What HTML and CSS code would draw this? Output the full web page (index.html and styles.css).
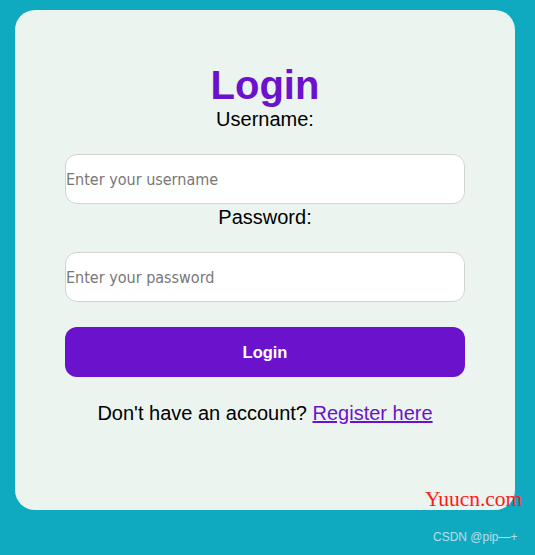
FILE: index.html
```html
<!DOCTYPE html>
<html>
<head>
<meta charset="utf-8">
<link rel="stylesheet" href="styles.css">
</head>
<body>
<div class="card">
  <h1 class="title">Login</h1>
  <form class="form">
    <label class="label" for="u">Username:</label>
    <input class="field" id="u" type="text" placeholder="Enter your username">
    <label class="label" for="p">Password:</label>
    <input class="field" id="p" type="password" placeholder="Enter your password">
    <button class="btn" type="button">Login</button>
  </form>
  <p class="foot">Don't have an account? <a class="link" href="#">Register here</a></p>
</div>
<div class="wm-site">Yuucn.com</div>
<div class="wm-csdn">CSDN @pip—+</div>
</body>
</html>
```
FILE: styles.css
```css
html, body { margin: 0; }
body {
  background: #10aac0;
  padding: 10px 20px 0 15px;
  font-family: "Liberation Sans", Arial, sans-serif;
  height: 555px;
  box-sizing: border-box;
  position: relative;
}
.card {
  width: 500px;
  height: 500px;
  box-sizing: border-box;
  background: #ebf4ef;
  border-radius: 20px;
  padding: 52px 50px 0;
  text-align: center;
}
.title {
  margin: 0;
  font-size: 40px;
  font-weight: bold;
  color: #6b12cc;
  line-height: 46px;
}
.form { display: flex; flex-direction: column; }
.label {
  display: block;
  font-size: 20px;
  line-height: 23px;
  color: #000;
}
.field {
  margin: 23px 0 2px;
  height: 50px;
  box-sizing: border-box;
  border: 1px solid #d3d3d3;
  border-radius: 12px;
  background: #fff;
  padding: 0;
  font-family: "DejaVu Sans Condensed", "DejaVu Sans", Tahoma, sans-serif;
  font-size: 16px;
}
.field::placeholder { color: #777; }
.btn {
  margin-top: 23px;
  height: 50px;
  border: none;
  border-radius: 12px;
  background: #6b12cc;
  color: #fff;
  font-family: "Liberation Sans", Arial, sans-serif;
  font-weight: bold;
  font-size: 16.5px;
}
.foot {
  margin: 25px 0 0;
  font-size: 20px;
  line-height: 23px;
  color: #000;
}
.link { color: #6b12cc; text-decoration: underline; }
.wm-site {
  position: absolute;
  left: 425px;
  top: 487px;
  font-family: "Liberation Serif", "Times New Roman", serif;
  font-size: 21.5px;
  color: #ff1a1a;
}
.wm-csdn {
  position: absolute;
  left: 433px;
  top: 530px;
  font-family: "Liberation Sans", Arial, sans-serif;
  font-size: 12px;
  color: rgba(225, 235, 240, 0.8);
}
```
